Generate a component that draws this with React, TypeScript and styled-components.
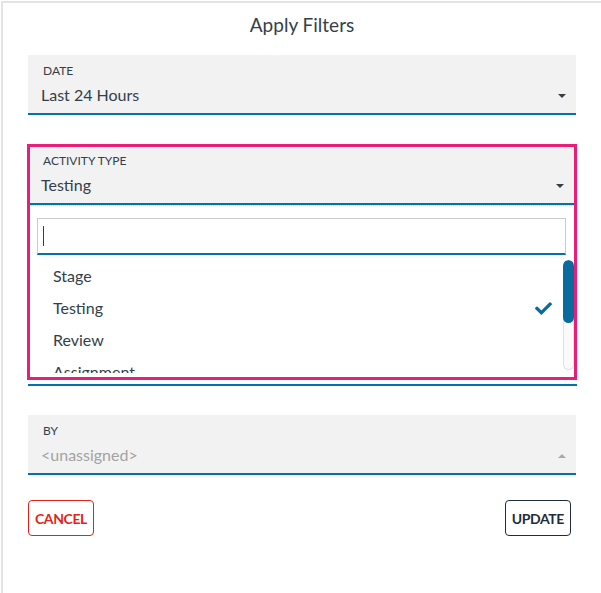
import styled, { createGlobalStyle } from 'styled-components'

const ink = '#333f48'
const blue = '#0073a8'
const pink = '#e91e78'

const Global = createGlobalStyle`
  html, body {
    margin: 0;
    padding: 0;
    background: #fff;
    overflow: hidden;
  }
  body {
    font-family: Lato, 'Noto Sans', sans-serif;
    color: ${ink};
  }
`

const Panel = styled.div`
  box-sizing: border-box;
  margin: 1px 0 0 1px;
  min-height: calc(100vh - 1px);
  border-left: 2px solid #e4e4e4;
  border-top: 2px solid #e4e4e4;
  padding: 10px 25px 0 25px;
`

const Title = styled.h1`
  margin: 0 0 18px;
  font-size: 19px;
  line-height: 24px;
  font-weight: 400;
  text-align: center;
  color: ${ink};
`

// $inset is set when the field sits inside the focus ring
const Field = styled.div<{ $inset?: boolean }>`
  box-sizing: border-box;
  height: ${(p) => (p.$inset ? 58 : 60)}px;
  padding: ${(p) => (p.$inset ? '6px 10px 0 13px' : '8px 10px 0 15px')};
  background: #f2f2f2;
  border-bottom: 2px solid ${blue};
`

const Label = styled.div`
  font-size: 12px;
  line-height: 16px;
  text-transform: uppercase;
  color: ${ink};
`

const ValueRow = styled.div`
  display: flex;
  align-items: center;
  justify-content: space-between;
  margin-top: 4px;
  margin-left: -2px;
`

const Value = styled.span<{ $placeholder?: boolean }>`
  font-size: 16px;
  line-height: 24px;
  color: ${(p) => (p.$placeholder ? '#a3a3a3' : ink)};
`

const Caret = styled.span<{ $up?: boolean; $muted?: boolean }>`
  width: 0;
  height: 0;
  margin-top: 2px;
  border-left: 4px solid transparent;
  border-right: 4px solid transparent;
  ${(p) =>
    p.$up
      ? `border-bottom: 4px solid ${p.$muted ? '#a9a9a9' : ink};`
      : `border-top: 4px solid ${p.$muted ? '#a9a9a9' : ink};`}
`

const Focused = styled.div`
  margin: 29px -1px 0;
  border: 3px solid ${pink};
`

const Dropdown = styled.div`
  height: 171px;
  border-top: 1px dotted #d6d6d6;
  background: #fff;
  display: flex;
  flex-direction: column;
  overflow: hidden;
`

const Search = styled.div`
  box-sizing: border-box;
  height: 37px;
  margin: 12px 8px 0 7px;
  padding-left: 5px;
  display: flex;
  align-items: center;
  border: 1px solid #cbcbcb;
  border-bottom: 2px solid ${blue};
`

const Cursor = styled.span`
  width: 1px;
  height: 20px;
  background: ${ink};
`

const ListArea = styled.div`
  flex: 1;
  display: flex;
  margin-top: 5px;
  padding-bottom: 4px;
  min-height: 0;
`

const Options = styled.ul`
  flex: 1;
  margin: 0;
  padding: 0;
  list-style: none;
  overflow: hidden;
`

const Option = styled.li`
  display: flex;
  align-items: center;
  justify-content: space-between;
  height: 32px;
  padding: 0 11px 0 23px;
  font-size: 16px;
  line-height: 32px;
  color: ${ink};
`

const Track = styled.div`
  box-sizing: border-box;
  width: 11px;
  height: 110px;
  border-radius: 6px;
  background: #fafafa;
  box-shadow: inset 0 0 0 1px #e2e2e2;
  overflow: hidden;
`

const Thumb = styled.div`
  height: 63px;
  border-radius: 6px;
  background: #0a6c9e;
`

const Underline = styled.div`
  height: 2px;
  margin: 4px -1px 0 0;
  background: ${blue};
`

const Spaced = styled.div`
  margin-top: 29px;
`

const Actions = styled.div`
  display: flex;
  justify-content: space-between;
  margin-top: 25px;
  padding-right: 5px;
`

const Button = styled.button<{ $tone: 'danger' | 'plain' }>`
  box-sizing: border-box;
  height: 36px;
  padding: 0 6px;
  border-radius: 4px;
  background: #fff;
  font-family: Lato, 'Noto Sans', sans-serif;
  font-size: 14px;
  font-weight: 700;
  letter-spacing: -0.4px;
  text-transform: uppercase;
  color: ${(p) => (p.$tone === 'danger' ? '#e2231a' : '#1f2d3a')};
  border: 1px solid ${(p) => (p.$tone === 'danger' ? '#e2231a' : '#1f2d3a')};
`

function Check() {
  return (
    <svg width="17" height="13" viewBox="0 64 512 384" fill="#0a6c9e">
      <path d="M173.9 439.4l-166.4-166.4c-10-10-10-26.2 0-36.2l36.2-36.2c10-10 26.2-10 36.2 0L192 312.7 432.1 72.6c10-10 26.2-10 36.2 0l36.2 36.2c10 10 10 26.2 0 36.2l-294.4 294.4c-10 10-26.2 10-36.2 0z" />
    </svg>
  )
}

const activityTypes = ['Stage', 'Testing', 'Review', 'Assignment']

export default function App() {
  const selected = 'Testing'
  return (
    <>
      <Global />
      <Panel>
        <Title>Apply Filters</Title>

        <Field>
          <Label>Date</Label>
          <ValueRow>
            <Value>Last 24 Hours</Value>
            <Caret />
          </ValueRow>
        </Field>

        <Focused>
          <Field $inset>
            <Label>Activity Type</Label>
            <ValueRow>
              <Value>{selected}</Value>
              <Caret />
            </ValueRow>
          </Field>
          <Dropdown>
            <Search>
              <Cursor />
            </Search>
            <ListArea>
              <Options>
                {activityTypes.map((t) => (
                  <Option key={t}>
                    {t}
                    {t === selected && <Check />}
                  </Option>
                ))}
              </Options>
              <Track>
                <Thumb />
              </Track>
            </ListArea>
          </Dropdown>
        </Focused>
        <Underline />

        <Spaced>
          <Field>
            <Label>By</Label>
            <ValueRow>
              <Value $placeholder>&lt;unassigned&gt;</Value>
              <Caret $up $muted />
            </ValueRow>
          </Field>
        </Spaced>

        <Actions>
          <Button $tone="danger">Cancel</Button>
          <Button $tone="plain">Update</Button>
        </Actions>
      </Panel>
    </>
  )
}
